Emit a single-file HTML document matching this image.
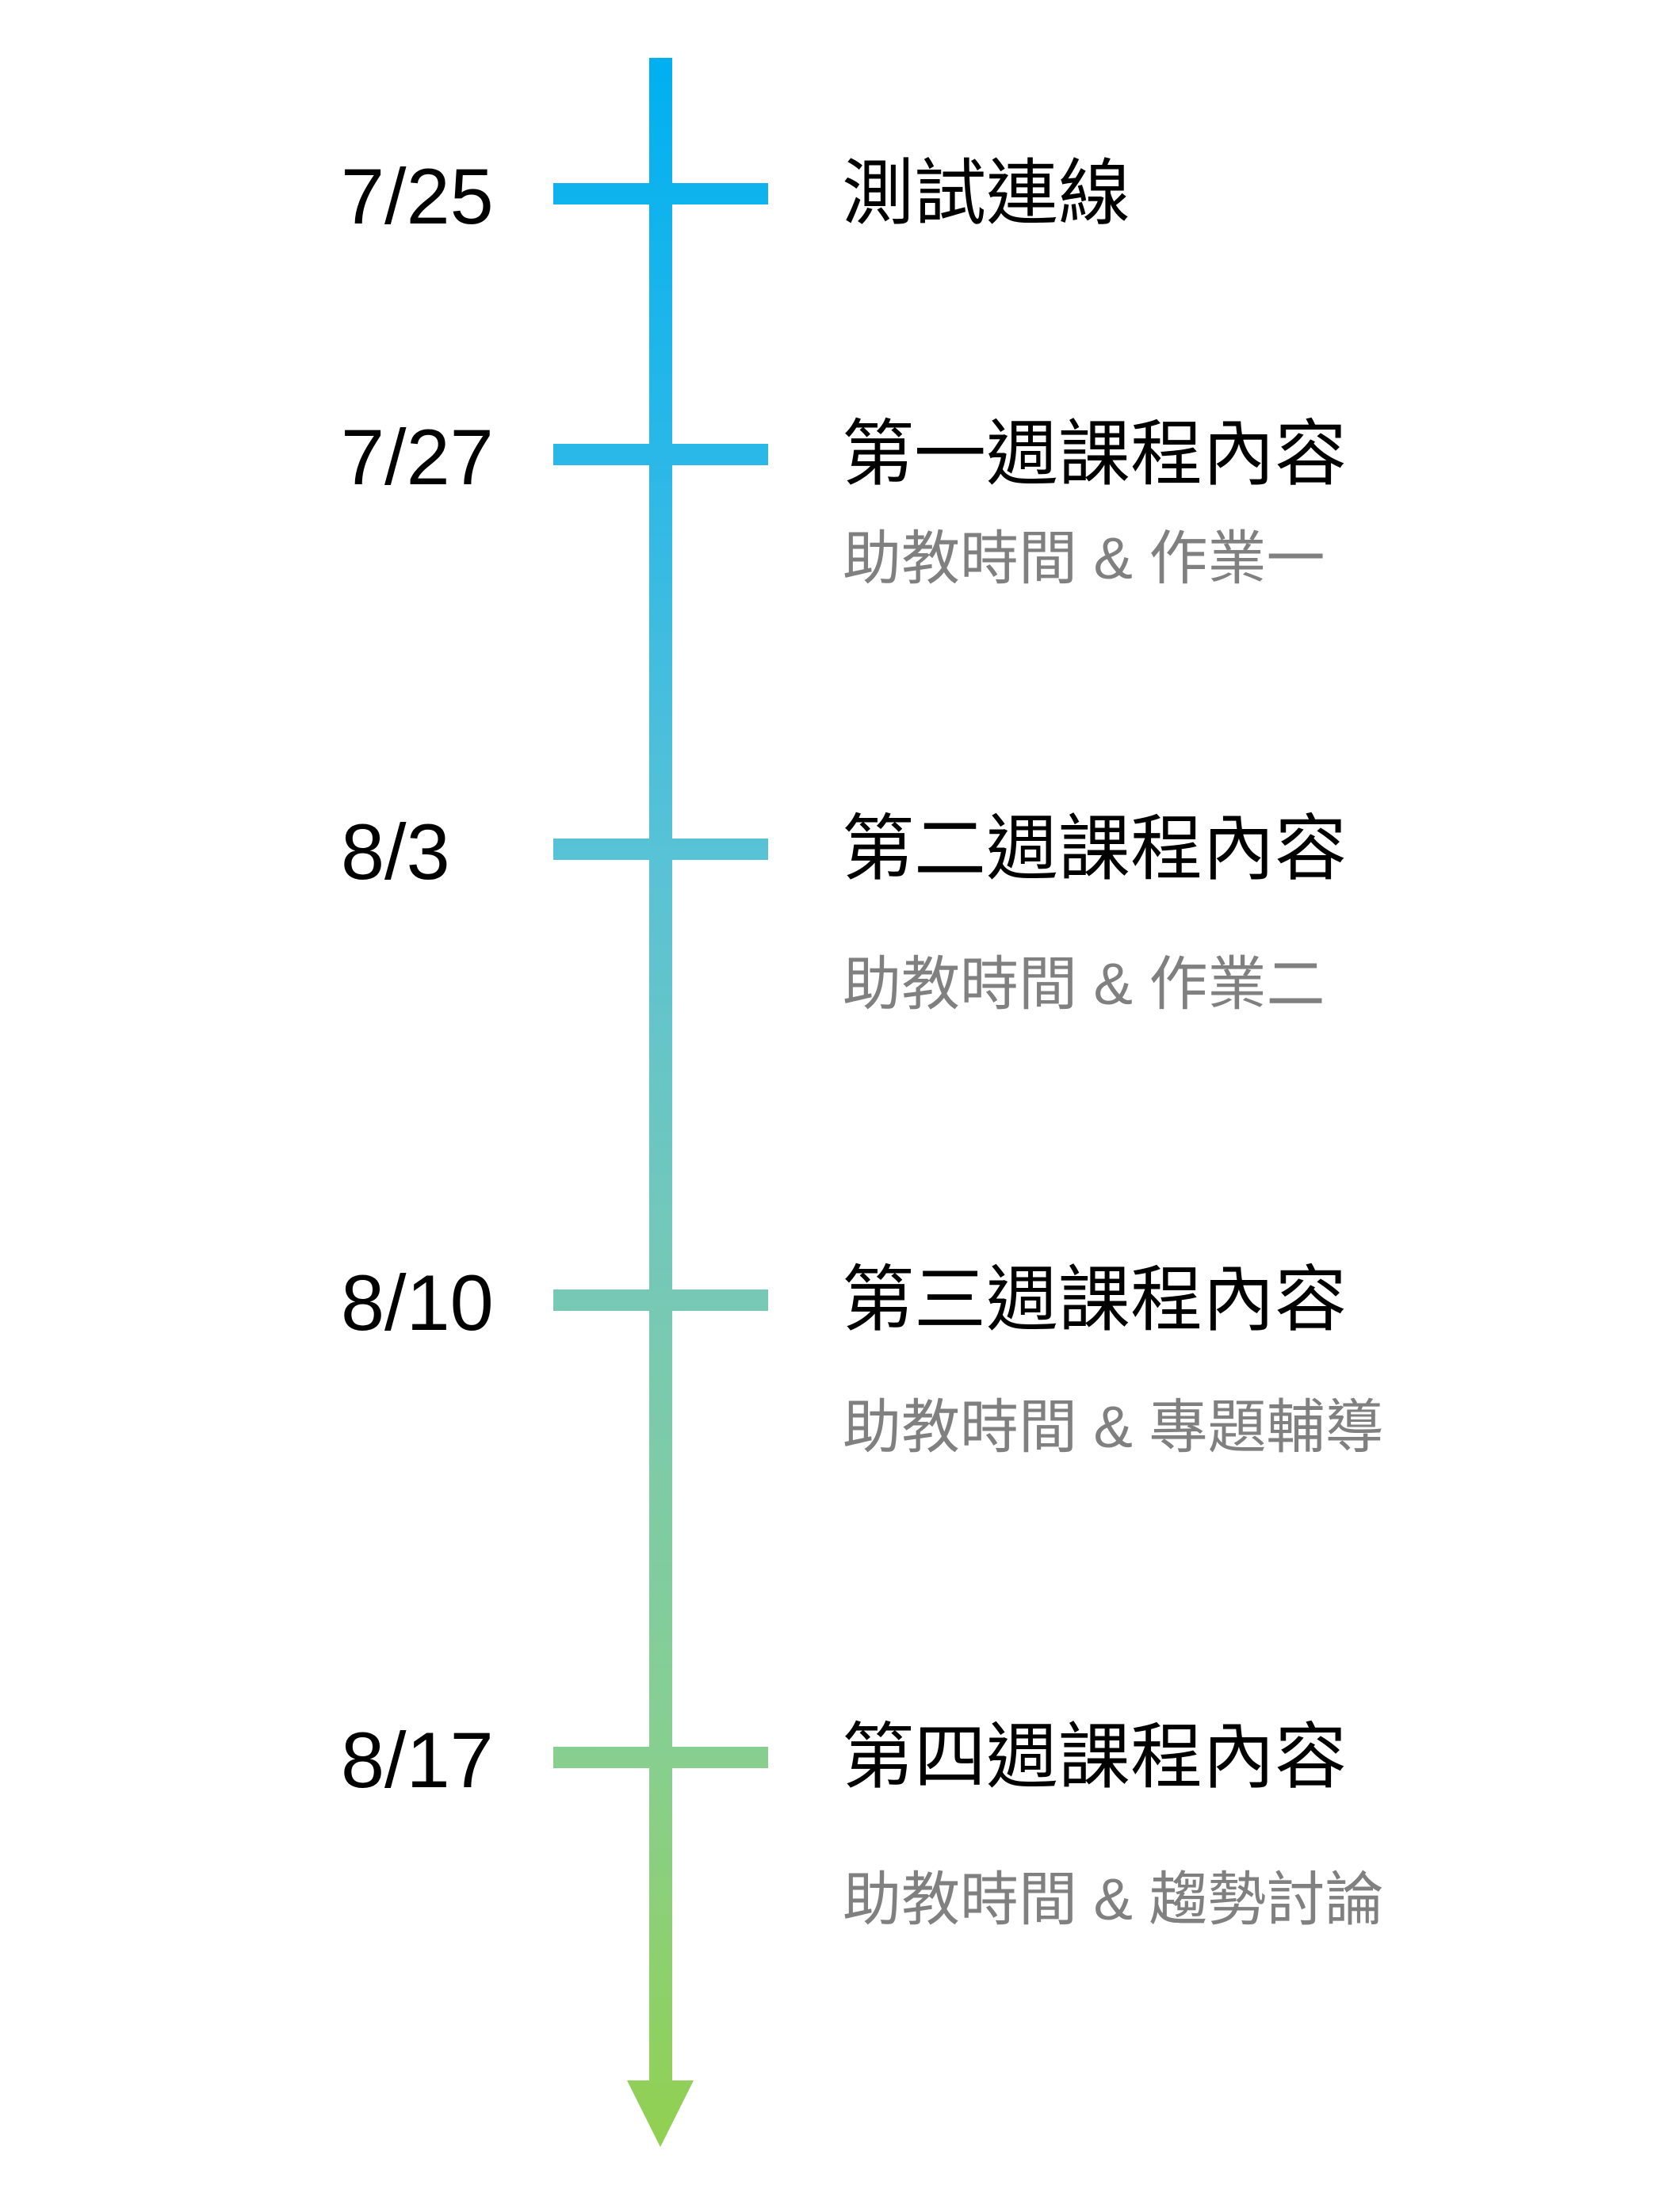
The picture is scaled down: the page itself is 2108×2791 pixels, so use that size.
<!DOCTYPE html>
<html><head><meta charset="utf-8"><style>
html,body{margin:0;padding:0;background:#fff;}
body{width:2108px;height:2791px;position:relative;overflow:hidden;}
.d{position:absolute;left:430px;font-family:"Liberation Sans",sans-serif;font-size:99px;line-height:1;color:#000;white-space:nowrap;}
.t{position:absolute;left:1062px;font-family:"Liberation Sans","Noto Sans CJK TC",sans-serif;font-size:91px;line-height:1;color:#000;white-space:nowrap;}
.s{position:absolute;left:1063px;font-family:"Liberation Sans","Noto Sans CJK TC",sans-serif;font-size:74px;line-height:1;color:#808080;white-space:nowrap;}
svg{position:absolute;left:0;top:0;}
</style></head><body>
<svg width="2108" height="2791">
<defs><linearGradient id="g" gradientUnits="userSpaceOnUse" x1="0" y1="73" x2="0" y2="2709">
<stop offset="0" stop-color="#00b0f0"/>
<stop offset="0.19" stop-color="#2ab8e8"/>
<stop offset="0.38" stop-color="#58c2d6"/>
<stop offset="0.6" stop-color="#78c9b4"/>
<stop offset="0.82" stop-color="#88cf8e"/>
<stop offset="1" stop-color="#92d050"/></linearGradient></defs>
<rect x="819" y="73" width="29" height="2555" fill="url(#g)"/>
<polygon points="791,2625 875,2625 833,2709" fill="url(#g)"/>
<rect x="698" y="231" width="271" height="27" fill="url(#g)"/>
<rect x="698" y="560" width="271" height="27" fill="url(#g)"/>
<rect x="698" y="1058" width="271" height="27" fill="url(#g)"/>
<rect x="698" y="1627" width="271" height="27" fill="url(#g)"/>
<rect x="698" y="2204" width="271" height="27" fill="url(#g)"/>
</svg>
<div class="d" style="top:198px">7/25</div>
<div class="d" style="top:527px">7/27</div>
<div class="d" style="top:1025px">8/3</div>
<div class="d" style="top:1594px">8/10</div>
<div class="d" style="top:2171px">8/17</div>
<div class="t" style="top:199px">測試連線</div>
<div class="t" style="top:528px">第一週課程內容</div>
<div class="t" style="top:1026px">第二週課程內容</div>
<div class="t" style="top:1595px">第三週課程內容</div>
<div class="t" style="top:2172px">第四週課程內容</div>
<div class="s" style="top:668px">助教時間 &amp; 作業一</div>
<div class="s" style="top:1205px">助教時間 &amp; 作業二</div>
<div class="s" style="top:1764px">助教時間 &amp; 專題輔導</div>
<div class="s" style="top:2360px">助教時間 &amp; 趨勢討論</div>
</body></html>
